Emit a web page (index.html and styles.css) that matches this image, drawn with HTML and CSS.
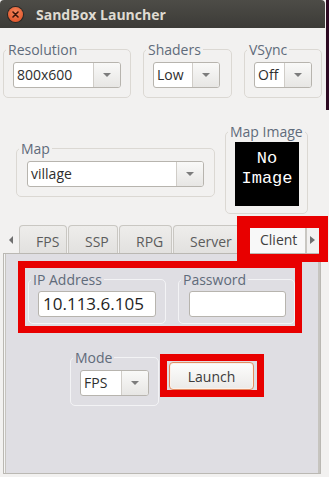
FILE: index.html
```html
<!DOCTYPE html>
<html lang="en">
<head>
  <meta charset="UTF-8" />
  <title>SandBox Launcher</title>
  <link rel="stylesheet" href="styles.css">
</head>
<body>
  <div class="window">
    <div class="titlebar">
      <span class="close">
        <svg width="7" height="7" viewBox="0 0 7 7"><path d="M1 1L6 6M6 1L1 6" stroke="#3a150a" stroke-width="1.6" stroke-linecap="round"/></svg>
      </span>
      <span class="title">SandBox Launcher</span>
    </div>

    <div class="row row-top">
      <fieldset class="group res">
        <legend>Resolution</legend>
        <div class="inner">
          <div class="combo"><span class="value">800x600</span><span class="drop"></span></div>
        </div>
      </fieldset>
      <fieldset class="group shaders">
        <legend>Shaders</legend>
        <div class="inner">
          <div class="combo"><span class="value">Low</span><span class="drop"></span></div>
        </div>
      </fieldset>
      <fieldset class="group vsync">
        <legend>VSync</legend>
        <div class="inner">
          <div class="combo"><span class="value">Off</span><span class="drop"></span></div>
        </div>
      </fieldset>
    </div>

    <div class="row row-map">
      <fieldset class="group map">
        <legend>Map</legend>
        <div class="inner">
          <div class="combo"><span class="value">village</span><span class="drop"></span></div>
        </div>
      </fieldset>
      <fieldset class="group map-image">
        <legend>Map Image</legend>
        <div class="inner">
          <div class="no-image">No<br>Image</div>
        </div>
      </fieldset>
    </div>

    <div class="notebook">
      <div class="tabs">
        <span class="scroll scroll-left"><i></i></span>
        <span class="tab t-fps">FPS</span>
        <span class="tab t-ssp">SSP</span>
        <span class="tab t-rpg">RPG</span>
        <span class="tab t-server">Server</span>
        <span class="tab t-client active">Client</span>
        <span class="scroll scroll-right"><i></i></span>
        <div class="mark mark-tab"></div>
      </div>

      <div class="page">
        <div class="mark-box net">
          <fieldset class="group light ip">
            <legend>IP Address</legend>
            <div class="inner">
              <div class="entry ip-entry">10.113.6.105</div>
            </div>
          </fieldset>
          <fieldset class="group light password">
            <legend>Password</legend>
            <div class="inner">
              <div class="entry"></div>
            </div>
          </fieldset>
        </div>

        <div class="row row-launch">
          <fieldset class="group light mode">
            <legend>Mode</legend>
            <div class="inner">
              <div class="combo"><span class="value">FPS</span><span class="drop"></span></div>
            </div>
          </fieldset>
          <div class="mark-box launch-mark">
            <button class="launch">Launch</button>
          </div>
        </div>
      </div>
    </div>
  </div>
</body>
</html>
```

FILE: styles.css
```css
:root {
  --window: #f2f1f0;
  --page: #dfdee3;
  --legend: #5f6b7a;
  --text: #2e2e2e;
  --mark: #e80000;
}

body {
  margin: 0;
  background: #2d0922;
  font-family: "Open Sans", "DejaVu Sans", sans-serif;
  font-size: 14px;
  color: var(--text);
}

.window {
  width: 329px;
  height: 477px;
  background: linear-gradient(#2d0922, #2d0922) right top / 3px 110px no-repeat, var(--window);
  overflow: hidden;
  display: flex;
  flex-direction: column;
}

/* title bar */
.titlebar {
  height: 28px;
  margin-right: 4px;
  background: linear-gradient(#4d4c47, #3c3b37);
  border-radius: 4px 4px 0 0;
  display: flex;
  align-items: center;
  flex-shrink: 0;
}

.close {
  width: 15px;
  height: 15px;
  margin-left: 8px;
  border-radius: 50%;
  background: radial-gradient(circle at 50% 35%, #f5865c, #dc4a1f);
  box-shadow: 0 0 0 1px #2b2622;
  display: flex;
  align-items: center;
  justify-content: center;
}

.title {
  margin-left: 13px;
  font-weight: 700;
  font-size: 14px;
  color: #dfdbd2;
}

/* frames */
.group {
  margin: 0;
  padding: 0;
  min-width: 0;
  box-sizing: border-box;
  border: 1px solid #dbd8d3;
  border-radius: 5px;
}

.group legend {
  margin-left: 2px;
  padding: 0 2px;
  font-size: 14px;
  line-height: 17px;
  color: var(--legend);
}

.group .inner {
  padding: 4px 9px 9px;
}

.group.light {
  border-color: #f3f3f5;
}

/* combo boxes */
.combo {
  display: flex;
  height: 26px;
  box-sizing: border-box;
  border: 1px solid #b7b4ae;
  border-radius: 3px;
  background: #fff;
  overflow: hidden;
}

.combo .value {
  flex: 1;
  padding-left: 3px;
  line-height: 24px;
  color: var(--text);
}

.combo .drop {
  width: 26px;
  border-left: 1px solid #d0cdc8;
  background: linear-gradient(#f9f9f8, #e7e6e4);
  display: flex;
  align-items: center;
  justify-content: center;
}

.combo .drop::after {
  content: "";
  border-left: 4px solid transparent;
  border-right: 4px solid transparent;
  border-top: 4px solid #7c7c7c;
}

.row {
  display: flex;
}

.row-top {
  gap: 12px;
  margin: 13px 0 0 3px;
}

.res { width: 128px; }
.shaders { width: 89px; }
.vsync { width: 78px; }
.shaders .inner { padding-right: 11px; }

.row-map {
  align-items: center;
  gap: 10px;
  margin: 25px 0 0 16px;
}

.map { width: 199px; }
.map .inner { padding: 4px 10px 9px; }

.map-image { width: 83px; }
.map-image .inner { padding: 2px 8px 7px 9px; }

.no-image {
  width: 64px;
  height: 64px;
  box-sizing: border-box;
  padding-top: 7px;
  background: #000;
  color: #fff;
  font-family: "Liberation Mono", "DejaVu Sans Mono", monospace;
  font-size: 17px;
  line-height: 20px;
  text-align: center;
}

/* notebook */
.notebook {
  width: 318px;
  margin: 11px 0 0 3px;
}

.tabs {
  position: relative;
  height: 28px;
  display: flex;
  align-items: flex-end;
}

.scroll {
  height: 28px;
  display: flex;
  align-items: center;
  justify-content: center;
  box-sizing: border-box;
  padding-top: 2px;
}

.scroll-left { width: 16px; }
.scroll-right { width: 12px; border-left: 1px solid #c9c7c2; }

.scroll-left i {
  border-top: 4px solid transparent;
  border-bottom: 4px solid transparent;
  border-right: 4px solid #6f6f6f;
}

.scroll-right i {
  border-top: 4px solid transparent;
  border-bottom: 4px solid transparent;
  border-left: 5px solid #6f6f6f;
}

.tab {
  height: 28px;
  box-sizing: border-box;
  margin-right: 1px;
  padding: 3px 0 0 16px;
  border: 1px solid #c9c7c2;
  border-bottom: none;
  border-radius: 4px 4px 0 0;
  background: linear-gradient(#eeedeb, #e2e1df);
  color: #5c5c5c;
  display: flex;
  align-items: center;
}

.t-fps { width: 48px; }
.t-ssp { width: 50px; }
.t-rpg { width: 53px; }
.t-server { width: 67px; }

.tab.active {
  width: 65px;
  height: 31px;
  margin-right: 0;
  padding-left: 18px;
  background: #f8f8f8;
  color: #404040;
}

.mark {
  position: absolute;
  z-index: 2;
  border-style: solid;
  border-color: var(--mark);
  box-sizing: border-box;
}

.mark-tab {
  left: 234px;
  top: -9px;
  width: 91px;
  height: 46px;
  border-width: 12px 9px 8px 13px;
}

.page {
  height: 221px;
  box-sizing: border-box;
  border: 1px solid #bab8b3;
  background: var(--page);
  box-shadow: inset 1px 0 0 #f4f4f4, inset 2px 0 0 #c6c4bf, inset -2px 0 0 #c6c4bf;
}

.mark-box {
  border: 7px solid var(--mark);
  box-sizing: border-box;
}

.net {
  width: 284px;
  margin: 7px 0 0 14px;
  padding: 3px 0 2px 3px;
  display: flex;
  gap: 12px;
}

.ip { width: 138px; }
.password { width: 117px; }
.password .inner { padding: 3px 8px 6px 10px; }
.ip .inner { padding: 3px 9px 6px; }

.entry {
  height: 26px;
  box-sizing: border-box;
  border: 1px solid #b7b4ae;
  border-radius: 3px;
  background: #fff;
}

.ip-entry {
  padding-left: 4px;
  font-size: 17px;
  line-height: 24px;
  color: #1e1e1e;
}

.row-launch {
  align-items: flex-start;
  margin: 16px 0 0 66px;
}

.mode { width: 89px; }

.launch-mark {
  margin: 5px 0 0 1px;
  padding: 1px 3px 0 2px;
}

.launch {
  display: block;
  width: 85px;
  height: 28px;
  padding: 0;
  border: 1px solid #e38c62;
  border-radius: 4px;
  background: linear-gradient(#fdfdfc, #ebeae8);
  box-shadow: inset 0 0 0 1px #fbf1ea;
  font-family: "Open Sans", "DejaVu Sans", sans-serif;
  font-size: 14px;
  color: #3c3c3c;
}
```
